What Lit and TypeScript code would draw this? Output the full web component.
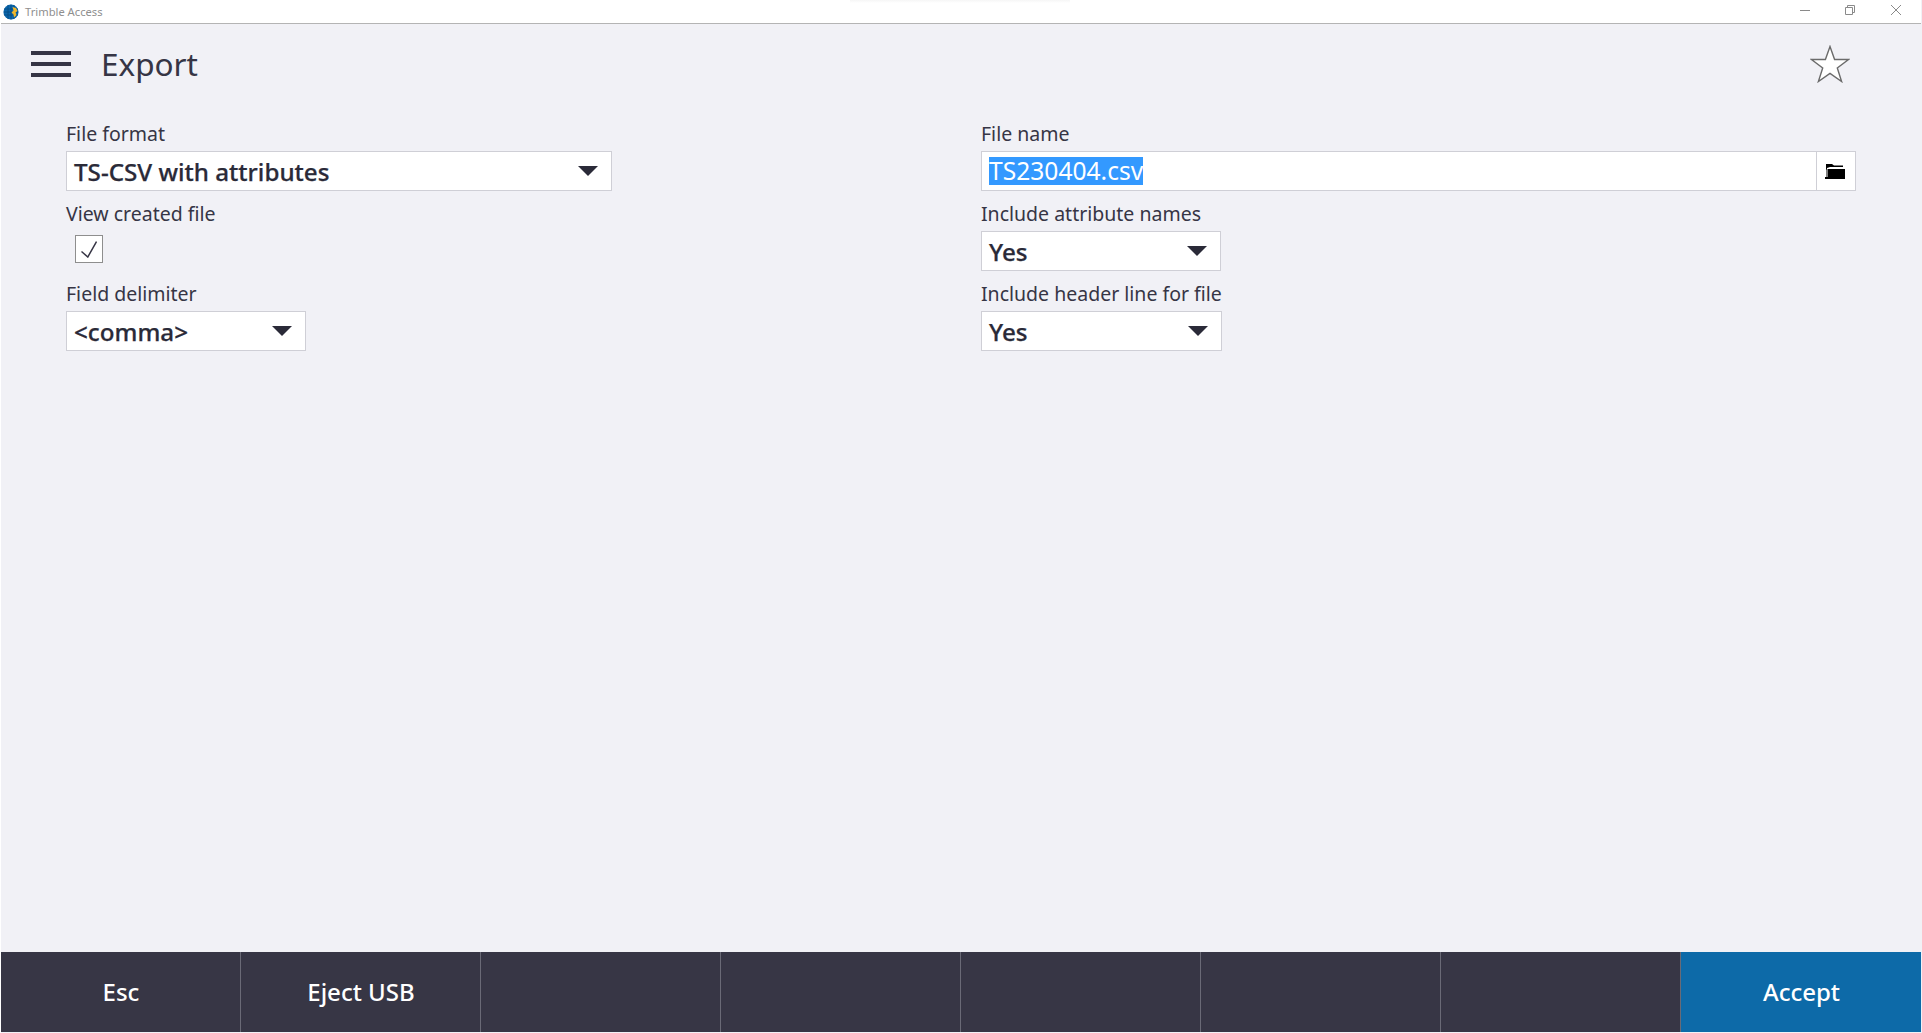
import { LitElement, html, css } from "lit";
import { customElement } from "lit/decorators.js";

const caret = html`<svg class="caret" viewBox="0 0 20 10" width="20" height="10"><path d="M0 0H20L10 10Z" fill="#2a2a38"/></svg>`;

@customElement("app-root")
export class AppRoot extends LitElement {
  static styles = css`
    :host { display: flex; flex-direction: column; width: 1922px; height: 1033px; box-sizing: border-box; background: #f1f1f6; font-family: "Noto Sans", "Open Sans", sans-serif; color: #363545; overflow: hidden; border-left: 1px solid #fff; position: relative; }
    .titlebar { height: 23px; flex: none; background: #fff; border-bottom: 1px solid #b4b4b4; display: flex; align-items: center; padding-left: 2px; margin-right: 1px; }
    .app-name { font-size: 11.2px; color: #8f8f8f; margin-left: 6px; flex: 1; }
    .globe { display: block; }
    .win { display: flex; height: 100%; align-items: center; padding-bottom: 3px; box-sizing: border-box; }
    .win svg { display: block; }
    .win-min { margin-right: 35px; }
    .win-max { margin-right: 36px; }
    .win-close { margin-right: 20px; }
    .header { flex: none; height: 80px; display: flex; align-items: center; padding: 0 72px 0 30px; }
    .menu { display: flex; flex-direction: column; gap: 7px; width: 40px; margin-right: 30px; }
    .menu i { display: block; height: 4px; background: #363545; }
    .title { flex: 1; font-size: 31.5px; line-height: 1; }
    .form { flex: 1; display: grid; grid-template-columns: 915px 875px; grid-auto-rows: 80px; padding: 7px 0 0 65px; align-content: start; }
    .row { display: flex; flex-direction: column; }
    .label { font-size: 19.5px; line-height: 27px; height: 40px; padding-top: 9px; box-sizing: border-box; }
    .field { height: 40px; box-sizing: border-box; background: #fff; border: 1px solid #cfcfd6; display: flex; align-items: center; padding-left: 7px; padding-right: 13px; font-size: 24.2px; font-weight: 500; -webkit-text-stroke: .25px #2a2a38; color: #2a2a38; justify-content: space-between; }
    .w-format { width: 546px; }
    .w-delim { width: 240px; }
    .w-attr { width: 240px; }
    .w-head { width: 241px; }
    .file { padding: 0; width: 875px; font-weight: 400; color: #363545; -webkit-text-stroke: 0; }
    .file .value { flex: 1; padding-left: 7px; display: flex; align-items: center; height: 100%; }
    .sel { background: #3399ff; color: #fff; font-size: 24.6px; line-height: 28px; display: block; }
    .browse { width: 39px; height: 100%; border-left: 1px solid #cfcfd6; display: flex; align-items: center; justify-content: center; padding-right: 2px; box-sizing: border-box; }
    .check { width: 28px; height: 28px; margin: 4px 0 0 9px; box-sizing: border-box; background: #fff; border: 1px solid #8e8e8e; display: flex; align-items: center; justify-content: center; }
    .footer { flex: none; height: 80px; display: grid; grid-template-columns: repeat(7, 240px) 1fr; margin-bottom: 1px; margin-right: 1px; }
    .btn { background: #373645; color: #fff; font-size: 24px; font-weight: 500; display: flex; align-items: center; justify-content: center; border-right: 1px solid #6a6a76; padding: 0 0 2px 1px; box-sizing: border-box; }
    .btn.accept { background: #0d6aa8; border-right: 0; }
    .tick { position: absolute; left: -1px; top: 215px; width: 1px; height: 8px; background: #111; }
    .shade { position: absolute; left: 849px; top: 0; width: 220px; height: 3px; background: linear-gradient(#f6f6f6, #fff); }
  `;

  render() {
    return html`
      <div class="titlebar">
        <svg class="globe" width="16" height="16" viewBox="0 0 16 16">
          <circle cx="8" cy="8" r="7.6" fill="#0a67ad"/>
          <path d="M1 5H15M1 8H15M1 11H15M5 1V15M8 .5V15.5M11 1V15" stroke="#06497f" stroke-width=".8" fill="none"/>
          <path d="M9.5 3l3.5 1 1.5 3-2 1.5 1 2.5-2.5 2.5-.5-3-2-2 2-2z" fill="#eeb62c"/>
        </svg>
        <span class="app-name">Trimble Access</span>
        <div class="win">
          <svg class="win-min" width="10" height="10" viewBox="0 0 10 10"><path d="M0 5.5H10" stroke="#8a8a8a"/></svg>
          <svg class="win-max" width="10" height="10" viewBox="0 0 10 10"><path d="M.5 2.5h7v7h-7zM2.5 2.5v-2h7v7h-2" stroke="#8a8a8a" fill="none"/></svg>
          <svg class="win-close" width="10" height="10" viewBox="0 0 10 10"><path d="M0 0L10 10M10 0L0 10" stroke="#8a8a8a"/></svg>
        </div>
      </div>
      <div class="header">
        <div class="menu"><i></i><i></i><i></i></div>
        <div class="title">Export</div>
        <svg width="40" height="38" viewBox="0 0 40 38"><path d="M20 1.500L24.600 14.500H38.500L27.300 23L31.600 36.500L20 28.400L8.400 36.500L12.700 23L1.500 14.500H15.400Z" fill="#fff" stroke="#6b6b6b" stroke-width="1.400"/></svg>
      </div>
      <div class="form">
        <div class="row"><div class="label">File format</div><div class="field w-format">TS-CSV with attributes ${caret}</div></div>
        <div class="row"><div class="label">File name</div>
          <div class="field file"><div class="value"><span class="sel">TS230404.csv</span></div>
            <div class="browse"><svg width="20" height="16" viewBox="0 0 20 16"><path d="M1 1h6l2 1.500h9V4H5L2 5v1.500h-.5V14H1zM2.500 6H20V16H0V14H2.500z" fill="#000"/></svg></div>
          </div>
        </div>
        <div class="row"><div class="label">View created file</div>
          <div class="check"><svg width="16" height="17" viewBox="0 0 16 17"><path d="M.5 10.500L6.800 16L15.500 .5" fill="none" stroke="#363545" stroke-width="1.500"/></svg></div>
        </div>
        <div class="row"><div class="label">Include attribute names</div><div class="field w-attr">Yes ${caret}</div></div>
        <div class="row"><div class="label">Field delimiter</div><div class="field w-delim">&lt;comma&gt; ${caret}</div></div>
        <div class="row"><div class="label">Include header line for file</div><div class="field w-head">Yes ${caret}</div></div>
      </div>
      <div class="footer">
        <div class="btn">Esc</div><div class="btn">Eject USB</div><div class="btn"></div><div class="btn"></div>
        <div class="btn"></div><div class="btn"></div><div class="btn"></div><div class="btn accept">Accept</div>
      </div>
      <div class="tick"></div>
      <div class="shade"></div>
    `;
  }
}
